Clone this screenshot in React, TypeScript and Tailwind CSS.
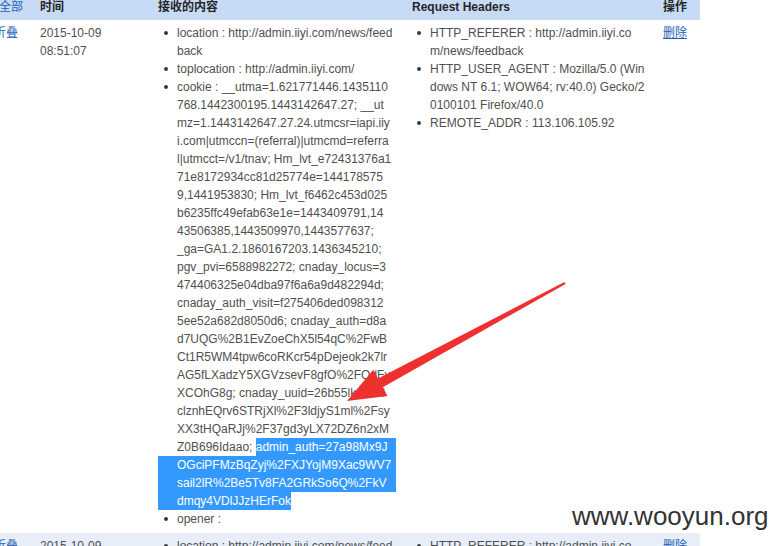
import React from "react";

const sans = "font-['Liberation_Sans','Arial','Noto_Sans_CJK_SC',sans-serif]";

// wrapped lines as they show in the capture (Firefox break-all)
const cookieLines = [
  "cookie : __utma=1.621771446.1435110",
  "768.1442300195.1443142647.27; __ut",
  "mz=1.1443142647.27.24.utmcsr=iapi.iiy",
  "i.com|utmccn=(referral)|utmcmd=referra",
  "l|utmcct=/v1/tnav; Hm_lvt_e72431376a1",
  "71e8172934cc81d25774e=144178575",
  "9,1441953830; Hm_lvt_f6462c453d025",
  "b6235ffc49efab63e1e=1443409791,14",
  "43506385,1443509970,1443577637;",
  "_ga=GA1.2.1860167203.1436345210;",
  "pgv_pvi=6588982272; cnaday_locus=3",
  "474406325e04dba97f6a6a9d482294d;",
  "cnaday_auth_visit=f275406ded098312",
  "5ee52a682d8050d6; cnaday_auth=d8a",
  "d7UQG%2B1EvZoeChX5l54qC%2FwB",
  "Ct1R5WM4tpw6coRKcr54pDejeok2k7lr",
  "AG5fLXadzY5XGVzsevF8gfO%2FQdFv",
  "XCOhG8g; cnaday_uuid=26b55lkG6Fil",
  "clznhEQrv6STRjXl%2F3ldjyS1ml%2Fsy",
  "XX3tHQaRJj%2F37gd3yLX72DZ6n2xM",
];

const selectedMid = ["OGciPFMzBqZyj%2FXJYojM9Xac9WV7", "sail2lR%2Be5Tv8FA2GRkSo6Q%2FkV"];

function Dot({ offset }: { offset: string }) {
  return (
    <span className={`flex h-[18px] shrink-0 items-center ${offset}`}>
      <span className="block h-[4px] w-[4px] rounded-full bg-[#3a3a3a]" />
    </span>
  );
}

function Item({ children, mid }: { children: React.ReactNode; mid?: boolean }) {
  return (
    <li className="flex">
      <Dot offset={mid ? "w-[19px] pl-[6px]" : "w-[18px] pl-[5px]"} />
      <div className="min-w-0 flex-1 whitespace-nowrap">{children}</div>
    </li>
  );
}

function Lines({ lines }: { lines: string[] }) {
  return (
    <>
      {lines.map((l, i) => (
        <div key={i}>{l}</div>
      ))}
    </>
  );
}

function Arrow() {
  return (
    <svg className="pointer-events-none absolute left-0 top-0" width="778" height="546" viewBox="0 0 778 546">
      <polygon
        fill="#ef3030"
        points="564.4,282.1 378,378.5 373.3,369.7 347,401 387.5,396.1 382.8,387.3 565.6,283.9"
      />
    </svg>
  );
}

export default function App() {
  return (
    <div className={`relative h-[546px] w-[778px] overflow-hidden bg-white text-[12px] leading-[18px] text-[#4f4f4f] ${sans}`}>
      <div className="ml-[-6px] w-[706px]">
        {/* header row */}
        <div className="flex h-[20px] bg-[#c7dbf6] leading-[15px] text-[#262626]">
          <div className="w-[46px] pl-[5px]">
            <a className="text-[#1d5fb8]">全部</a>
          </div>
          <div className="w-[118px] font-bold">时间</div>
          <div className="w-[254px] font-bold">接收的内容</div>
          <div className="w-[251px] font-bold">Request Headers</div>
          <div className="w-[37px] font-bold">操作</div>
        </div>

        {/* first record */}
        <div className="flex pb-[5px] pt-[4px]">
          <div className="w-[46px]">
            <a className="text-[#1d5fb8]">折叠</a>
          </div>
          <div className="w-[118px]">
            <div>2015-10-09</div>
            <div>08:51:07</div>
          </div>
          <div className="w-[254px]">
            <ul>
              <Item mid>
                <Lines lines={["location : http://admin.iiyi.com/news/feed", "back"]} />
              </Item>
              <Item mid>toplocation : http://admin.iiyi.com/</Item>
              <Item mid>
                <Lines lines={cookieLines} />
                <div className="flex w-[219px]">
                  <span>Z0B696Idaao;&nbsp;</span>
                  <span className="flex-1 bg-[#3399ff] text-white">admin_auth=27a98Mx9J</span>
                </div>
                {selectedMid.map((l) => (
                  <div key={l} className="ml-[-19px] w-[238px] bg-[#3399ff] pl-[19px] text-white">
                    {l}
                  </div>
                ))}
                <div>
                  <span className="ml-[-19px] inline-block bg-[#3399ff] pl-[19px] text-white">dmqy4VDlJJzHErFok</span>
                </div>
              </Item>
              <Item mid>opener :</Item>
            </ul>
          </div>
          <div className="w-[251px]">
            <ul>
              <Item>
                <Lines lines={["HTTP_REFERER : http://admin.iiyi.co", "m/news/feedback"]} />
              </Item>
              <Item>
                <Lines
                  lines={[
                    "HTTP_USER_AGENT : Mozilla/5.0 (Win",
                    "dows NT 6.1; WOW64; rv:40.0) Gecko/2",
                    "0100101 Firefox/40.0",
                  ]}
                />
              </Item>
              <Item>REMOTE_ADDR : 113.106.105.92</Item>
            </ul>
          </div>
          <div className="w-[37px]">
            <a className="text-[#1d5fb8] underline">删除</a>
          </div>
        </div>

        {/* next record, cut by the window */}
        <div className="flex bg-[#e8eef8] pt-[4px]">
          <div className="w-[46px]">
            <a className="text-[#1d5fb8]">折叠</a>
          </div>
          <div className="w-[118px]">
            <div>2015-10-09</div>
            <div>08:51:07</div>
          </div>
          <div className="w-[254px]">
            <ul>
              <Item mid>
                <Lines lines={["location : http://admin.iiyi.com/news/feed", "back"]} />
              </Item>
            </ul>
          </div>
          <div className="w-[251px]">
            <ul>
              <Item>
                <Lines lines={["HTTP_REFERER : http://admin.iiyi.co", "m/news/feedback"]} />
              </Item>
            </ul>
          </div>
          <div className="w-[37px]">
            <a className="text-[#1d5fb8] underline">删除</a>
          </div>
        </div>
      </div>

      <Arrow />

      <div className="absolute left-[572px] top-[503px] text-[26px] leading-[26px] text-[#333]">www.wooyun.org</div>
    </div>
  );
}
